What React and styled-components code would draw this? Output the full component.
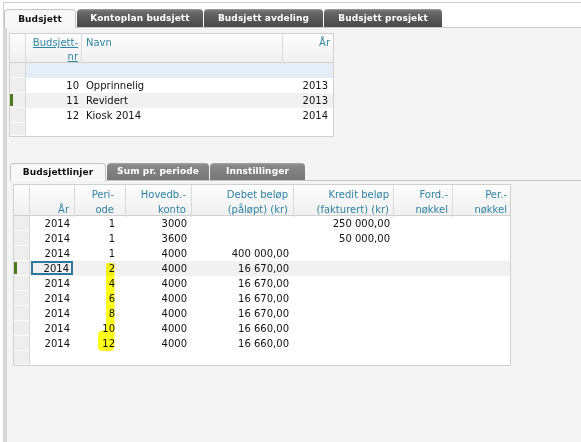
import React from 'react';
import styled, { createGlobalStyle } from 'styled-components';

const GlobalStyle = createGlobalStyle`
	html, body {
		margin: 0;
		padding: 0;
		background: #fff;
	}
	body {
		font-family: "DejaVu Sans", Verdana, sans-serif;
		font-size: 10px;
		color: #1a1a1a;
	}
`;

const TEAL = '#2f83a3';

const topCols = [
	{ w: '56px', pad: 3, align: 'right' },
	{ w: '201px', pad: 4, align: 'left' },
	{ w: '1fr', pad: 4, align: 'right' },
];

const lineCols = [
	{ w: '45px', pad: 5, align: 'right' },
	{ w: '51px', pad: 11, align: 'right' },
	{ w: '66px', pad: 5, align: 'right' },
	{ w: '102px', pad: 5, align: 'right' },
	{ w: '100px', pad: 4, align: 'right' },
	{ w: '59px', pad: 4, align: 'right' },
	{ w: '1fr', pad: 3, align: 'right' },
];

const budgets = [
	{ nr: '10', name: 'Opprinnelig', year: '2013' },
	{ nr: '11', name: 'Revidert', year: '2013', selected: true },
	{ nr: '12', name: 'Kiosk 2014', year: '2014' },
];

const lines = [
	['2014', '1', '3000', '', '250 000,00', '', ''],
	['2014', '1', '3600', '', '50 000,00', '', ''],
	['2014', '1', '4000', '400 000,00', '', '', ''],
	['2014', '2', '4000', '16 670,00', '', '', ''],
	['2014', '4', '4000', '16 670,00', '', '', ''],
	['2014', '6', '4000', '16 670,00', '', '', ''],
	['2014', '8', '4000', '16 670,00', '', '', ''],
	['2014', '10', '4000', '16 660,00', '', '', ''],
	['2014', '12', '4000', '16 660,00', '', '', ''],
];

const lineHeads = [
	['', 'År'],
	['Peri-', 'ode'],
	['Hovedb.-', 'konto'],
	['Debet beløp', '(påløpt) (kr)'],
	['Kredit beløp', '(fakturert) (kr)'],
	['Ford.-', 'nøkkel'],
	['Per.-', 'nøkkel'],
];

const template = (cols) => ['16px', ...cols.map((c) => c.w)].join(' ');

const App = () => {
	const topTemplate = template(topCols);
	const lineTemplate = template(lineCols);

	return (
		<>
			<GlobalStyle />
			<Frame>
				<TabStrip $top>
					<Tab $active $h={18} $w={72}>Budsjett</Tab>
					<Tab $dark $h={18} $w={126}>Kontoplan budsjett</Tab>
					<Tab $dark $h={18} $w={119}>Budsjett avdeling</Tab>
					<Tab $dark $h={18} $w={118}>Budsjett prosjekt</Tab>
				</TabStrip>

				<Body>
					<Grid $width={325}>
						<HeadRow $cols={topTemplate} $h={29} $lh={14}>
							<HeadSel />
							<HeadCell $pad={3} $align='right'>
								<SortLink>Budsjett-</SortLink>
								<br />
								<SortLink>nr</SortLink>
							</HeadCell>
							<HeadCell $pad={4} $align='left'>Navn</HeadCell>
							<HeadCell $pad={3} $align='right' $last>År</HeadCell>
						</HeadRow>

						<Row $cols={topTemplate}>
							<SelCell />
							<FilterCell />
							<FilterCell />
							<FilterCell />
						</Row>

						{budgets.map((b) => (
							<Row key={b.nr} $cols={topTemplate} $selected={b.selected}>
								<SelCell $marked={b.selected} />
								<Cell $pad={3} $align='right'>{b.nr}</Cell>
								<Cell $pad={4} $align='left'>{b.name}</Cell>
								<Cell $pad={5} $align='right'>{b.year}</Cell>
							</Row>
						))}

						<Row $cols={topTemplate} $h={13}>
							<SelCell />
						</Row>
					</Grid>

					<TabStrip>
						<Tab $active $h={17} $w={96}>Budsjettlinjer</Tab>
						<Tab $h={17} $w={102}>Sum pr. periode</Tab>
						<Tab $h={17} $w={95}>Innstillinger</Tab>
					</TabStrip>

					<Grid $width={498} $inset>
						<HeadRow $cols={lineTemplate} $h={31} $lh={15}>
							<HeadSel />
							{lineHeads.map((h, i) => (
								<HeadCell
									key={i}
									$pad={lineCols[i].pad}
									$align='right'
									$last={i === lineHeads.length - 1}
								>
									{h[0] || '\u00a0'}
									<br />
									{h[1]}
								</HeadCell>
							))}
						</HeadRow>

						{lines.map((r, ri) => {
							const selected = ri === 3;
							return (
								<Row key={ri} $cols={lineTemplate} $selected={selected}>
									<SelCell $marked={selected} />
									{r.map((v, ci) =>
										selected && ci === 0 ? (
											<Cell key={ci} $pad={0} $align='right'>
												<Focus>{v}</Focus>
											</Cell>
										) : (
											<Cell key={ci} $pad={lineCols[ci].pad} $align='right'>
												{v}
											</Cell>
										)
									)}
								</Row>
							);
						})}

						<Row $cols={lineTemplate} $h={14}>
							<SelCell />
						</Row>

						<Marker viewBox='0 0 120 180' width='120' height='180'>
							<path
								d='M92 79 Q96 76.5 100.5 79 L100.5 161 Q100.5 166 95 166 L88 166 Q84 166 84 161.5 L84 150 Q84 145.5 88.5 145.5 L92 145 Z'
								fill='#ffff1a'
							/>
						</Marker>
					</Grid>
				</Body>
			</Frame>
		</>
	);
};

const Frame = styled.div`
	margin: 2px 0 0 3px;
	border-top: 1px solid #cfcfcf;
	border-left: 1px solid #d2d2d2;
	height: 439px;
	display: flex;
	flex-direction: column;
	background: #fff;
`;

const TabStrip = styled.div`
	display: flex;
	align-items: flex-end;
	gap: 1px;
	padding-top: ${(p) => (p.$top ? '6px' : '0')};
	margin: ${(p) => (p.$top ? '0' : '26px 0 0 1px')};
	background: ${(p) => (p.$top ? '#fff' : 'transparent')};
	border-bottom: 1px solid #c6c6c6;
`;

const Tab = styled.div`
	box-sizing: border-box;
	width: ${(p) => p.$w}px;
	height: ${(p) => p.$h + (p.$active ? 1 : 0)}px;
	margin-bottom: ${(p) => (p.$active ? '-1px' : '0')};
	line-height: ${(p) => p.$h}px;
	text-align: center;
	font-weight: bold;
	font-size: 9px;
	letter-spacing: 0.1px;
	white-space: nowrap;
	border-radius: 4px 4px 0 0;
	color: ${(p) => (p.$active ? '#111' : '#fff')};
	background: ${(p) =>
		p.$active
			? '#f8f8f8'
			: p.$dark
			? 'linear-gradient(#a0a0a0 0, #6e6e6e 2px, #575757 55%, #4b4b4b 100%)'
			: 'linear-gradient(#a4a4a4 0, #8a8a8a 2px, #7e7e7e 60%, #777 100%)'};
	border: ${(p) => (p.$active ? '1px solid #c4c4c4' : 'none')};
	border-bottom: none;
`;

const Body = styled.div`
	flex: 1;
	margin-left: -1px;
	border-left: 4px solid #d8d8d8;
	background: #f4f4f4;
	padding: 5px 0 0 2px;
`;

const Grid = styled.div`
	position: relative;
	box-sizing: border-box;
	width: ${(p) => p.$width}px;
	margin: ${(p) => (p.$inset ? '3px 0 0 4px' : '0')};
	border: 1px solid #d0d0d0;
	background: #fff;
`;

const Row = styled.div`
	display: grid;
	grid-template-columns: ${(p) => p.$cols};
	height: ${(p) => p.$h || 15}px;
	line-height: ${(p) => p.$h || 15}px;
	background: ${(p) => (p.$selected ? '#f1f1f1' : '#fff')};
`;

const HeadRow = styled(Row)`
	line-height: ${(p) => p.$lh}px;
	background: linear-gradient(#fdfdfd, #f0f0f0);
	border-bottom: 1px solid #d0d0d0;
	box-sizing: border-box;
`;

const HeadSel = styled.div`
	border-right: 1px solid #dadada;
`;

const HeadCell = styled.div`
	padding: 2px ${(p) => p.$pad}px 0;
	text-align: ${(p) => p.$align};
	color: ${TEAL};
	white-space: nowrap;
	border-right: ${(p) => (p.$last ? 'none' : '1px solid #dadada')};
`;

const SortLink = styled.span`
	text-decoration: underline;
`;

const Cell = styled.div`
	padding: 0 ${(p) => p.$pad}px;
	text-align: ${(p) => p.$align};
	white-space: nowrap;
	overflow: hidden;
	color: #111;
`;

const FilterCell = styled.div`
	background: #e5edf8;
`;

const SelCell = styled.div`
	position: relative;
	box-sizing: border-box;
	grid-column: 1;
	background: #eeeeee;
	border-right: 1px solid #d8d8d8;
	border-bottom: 1px solid #fafafa;

	&::before {
		content: '';
		display: ${(p) => (p.$marked ? 'block' : 'none')};
		position: absolute;
		left: 0;
		top: 1px;
		bottom: 1px;
		width: 3px;
		background: #4c7a1c;
	}
`;

const Focus = styled.span`
	display: block;
	box-sizing: border-box;
	height: 14px;
	line-height: 11px;
	margin: 0 2px 0 1px;
	padding-right: 2px;
	border: 2px solid #2c7b9e;
`;

const Marker = styled.svg`
	position: absolute;
	left: 0;
	top: 0;
	pointer-events: none;
	mix-blend-mode: multiply;
`;

export default App;
